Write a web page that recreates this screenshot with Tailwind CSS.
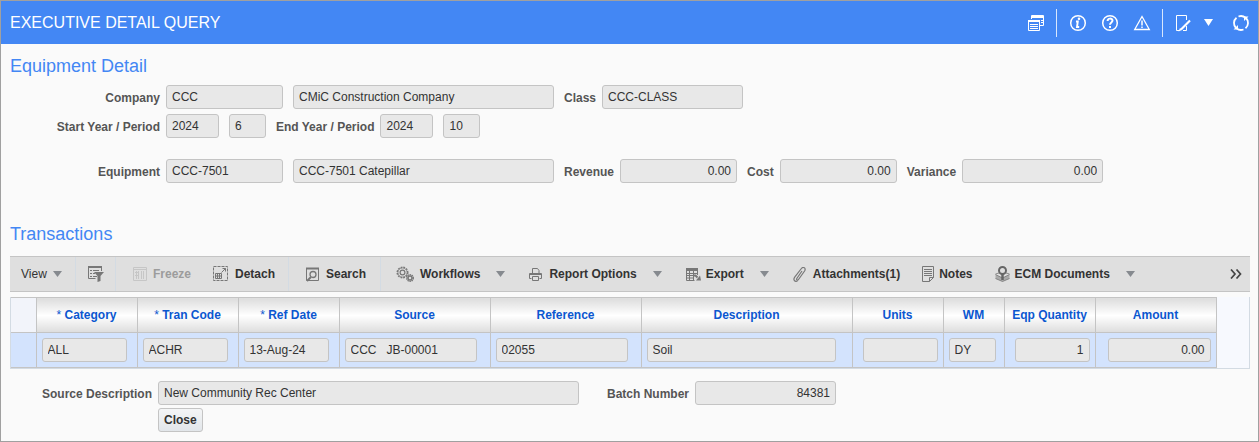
<!DOCTYPE html>
<html lang="en">
<head>
    <meta charset="UTF-8">
    <meta name="viewport" content="width=device-width, initial-scale=1.0">
    <title>Executive Detail Query</title>
    <script src="https://cdn.jsdelivr.net/npm/@tailwindcss/browser@4"></script>
</head>
<body class="bg-[#fafafa] font-['Liberation_Sans',Arial,sans-serif] text-xs text-[#333]">
    <div class="min-h-screen border border-[#a0a0a0]">
        <!-- Header -->
        <header class="flex h-[43px] items-center justify-between bg-[#4387f4] pl-[9px] pr-2 text-white">
            <h1 class="text-base">EXECUTIVE DETAIL QUERY</h1>
            <div class="flex items-center">
                <button aria-label="Windows" class="mr-3">
                    <svg class="size-4" viewBox="0 0 16 16" fill="none" stroke="currentColor">
                        <path d="M3.5 4V.5h12v10H12" /><path d="M3 2h13" stroke-width="2" />
                        <path d="M.5 5.5h11v10H.5z" /><path d="M0 6h12" stroke-width="2" />
                        <path d="M2 9.5h8M2 11.5h8M2 13.5h8M13 5.5h2M13 7.5h2" />
                    </svg>
                </button>
                <span class="h-7 w-px bg-white/80"></span>
                <button aria-label="Information" class="ml-3">
                    <svg class="size-[18px]" viewBox="0 0 18 18" fill="none" stroke="currentColor">
                        <circle cx="9" cy="9" r="7.3" stroke-width="1.5" />
                        <path d="M7 7.5h1.8L8 13h2.2" stroke-width="1.9" /><circle cx="10" cy="4.8" r="1.3" fill="currentColor" stroke="none" />
                    </svg>
                </button>
                <button aria-label="Help" class="ml-[14px]">
                    <svg class="size-[18px]" viewBox="0 0 18 18" fill="none" stroke="currentColor">
                        <circle cx="9" cy="9" r="7.3" stroke-width="1.5" />
                        <path d="M6.6 7c0-3.2 4.9-3 4.9-.4C11.5 8.5 9 8.4 9 10.8" stroke-width="2" /><path d="M8 12h2v2H8z" fill="currentColor" stroke="none" />
                    </svg>
                </button>
                <button aria-label="Warnings" class="ml-[14px]">
                    <svg class="size-[18px]" viewBox="0 0 18 18" fill="none" stroke="currentColor">
                        <path d="M9 2.5 16.3 15.5H1.7z" stroke-width="1.3" /><path d="M9 6.5v5M9 12.5V14" stroke-width="1.5" />
                    </svg>
                </button>
                <span class="ml-[11px] h-7 w-px bg-white/80"></span>
                <button aria-label="Edit" class="ml-3">
                    <svg class="h-[18px] w-4" viewBox="0 0 16 18" fill="none" stroke="currentColor">
                        <path d="M11.5 6V1.5H1.5v15h3M11.5 12v4.5H8" /><path d="m6 15.500 9-9" stroke-width="2.2" /><path d="M3.5 17.5 5 14l2 2z" fill="currentColor" stroke="none" />
                    </svg>
                </button>
                <button aria-label="Edit menu" class="ml-[13px]">
                    <svg class="h-[7px] w-[9px]" viewBox="0 0 9 7" fill="currentColor"><path d="M0 0h9L4.5 7z" /></svg>
                </button>
                <button aria-label="Refresh" class="ml-[19px]">
                    <svg class="size-[18px]" viewBox="0 0 18 18" fill="none" stroke="currentColor" stroke-width="1.8">
                        <path d="M4 14A7 7 0 0 1 4.5 3.7M6.5 2.5A7 7 0 0 1 13.5 3.7M14 4A7 7 0 0 1 13.5 14.3M11.500 15.5A7 7 0 0 1 4.5 14.3" />
                        <path d="M1.5 15.5H6V11zM16.5 2.5H12V7z" fill="currentColor" stroke="none" />
                    </svg>
                </button>
            </div>
        </header>

        <main class="pl-[9px] pr-2">
            <!-- Equipment detail -->
            <section>
                <h2 class="pt-2 text-lg text-[#4387f4]">Equipment Detail</h2>
                <div class="mt-[5px] flex items-center">
                    <label for="company" class="w-[150px] pt-0.5 text-right font-bold text-[#555]">Company</label>
                    <input id="company" value="CCC" readonly class="ml-1.5 h-6 w-[117px] rounded-[3px] border border-[#c4c4c4] bg-[#e8e8e8] px-[5px]">
                    <input aria-label="Company name" value="CMiC Construction Company" readonly class="ml-2.5 h-6 w-[261px] rounded-[3px] border border-[#c4c4c4] bg-[#e8e8e8] px-[5px]">
                    <label for="class" class="ml-2.5 pt-0.5 font-bold text-[#555]">Class</label>
                    <input id="class" value="CCC-CLASS" readonly class="ml-1.5 h-6 w-[141px] rounded-[3px] border border-[#c4c4c4] bg-[#e8e8e8] px-[5px]">
                </div>
                <div class="mt-[5px] flex items-center">
                    <label for="startYear" class="w-[150px] pt-0.5 text-right font-bold text-[#555]">Start Year / Period</label>
                    <input id="startYear" value="2024" readonly class="ml-1.5 h-6 w-[53px] rounded-[3px] border border-[#c4c4c4] bg-[#e8e8e8] px-[5px]">
                    <input aria-label="Start period" value="6" readonly class="ml-2.5 h-6 w-[37px] rounded-[3px] border border-[#c4c4c4] bg-[#e8e8e8] px-[5px]">
                    <label for="endYear" class="ml-2.5 pt-0.5 font-bold text-[#555]">End Year / Period</label>
                    <input id="endYear" value="2024" readonly class="ml-1.5 h-6 w-[53px] rounded-[3px] border border-[#c4c4c4] bg-[#e8e8e8] px-[5px]">
                    <input aria-label="End period" value="10" readonly class="ml-2.5 h-6 w-[37px] rounded-[3px] border border-[#c4c4c4] bg-[#e8e8e8] px-[5px]">
                </div>
                <div class="mt-[21px] flex items-center">
                    <label for="equipment" class="w-[150px] pt-0.5 text-right font-bold text-[#555]">Equipment</label>
                    <input id="equipment" value="CCC-7501" readonly class="ml-1.5 h-6 w-[117px] rounded-[3px] border border-[#c4c4c4] bg-[#e8e8e8] px-[5px]">
                    <input aria-label="Equipment name" value="CCC-7501 Catepillar" readonly class="ml-2.5 h-6 w-[261px] rounded-[3px] border border-[#c4c4c4] bg-[#e8e8e8] px-[5px]">
                    <label for="revenue" class="ml-2.5 pt-0.5 font-bold text-[#555]">Revenue</label>
                    <input id="revenue" value="0.00" readonly class="ml-1.5 h-6 w-[117px] rounded-[3px] border border-[#c4c4c4] bg-[#e8e8e8] px-[5px] text-right">
                    <label for="cost" class="ml-2.5 pt-0.5 font-bold text-[#555]">Cost</label>
                    <input id="cost" value="0.00" readonly class="ml-1.5 h-6 w-[117px] rounded-[3px] border border-[#c4c4c4] bg-[#e8e8e8] px-[5px] text-right">
                    <label for="variance" class="ml-2.5 pt-0.5 font-bold text-[#555]">Variance</label>
                    <input id="variance" value="0.00" readonly class="ml-1.5 h-6 w-[141px] rounded-[3px] border border-[#c4c4c4] bg-[#e8e8e8] px-[5px] text-right">
                </div>
            </section>

            <!-- Transactions -->
            <section class="mt-[37px]">
                <h2 class="text-lg text-[#4387f4]">Transactions</h2>

                <!-- Toolbar -->
                <div class="mt-2 flex h-9 items-center border-y border-[#c4c4c4] bg-[#dfdfdf] pl-[11px] pr-2 font-bold">
                    <button class="flex w-[54px] items-center font-normal">View
                        <svg class="ml-1.5 h-1.5 w-[9px]" viewBox="0 0 9 6" fill="#868a8f"><path d="M0 0h9L4.5 6z" /></svg>
                    </button>
                    <button aria-label="Query by example" class="flex h-full w-[41px] items-center border-x border-[#d3dbe3] pl-3">
                        <svg class="size-4" viewBox="0 0 16 16" fill="none" stroke="#777">
                            <path d="M0 1h14" stroke-width="2" /><path d="M.5 1v11.5h7M13.5 1v4M2 4.5h2M5 4.5h6M2 7.5h2M5 7.5h2M2 10.5h2M5 10.5h4" /><path d="M6 6h10l-3.5 4v5L9.5 16v-6z" fill="#777" stroke="none" />
                        </svg>
                    </button>
                    <button disabled class="ml-[17px] flex w-[80px] items-center gap-1.5 text-[#9c9c9c]">
                        <svg class="size-[14px]" viewBox="0 0 14 14" fill="none" stroke="#c6c6c6">
                            <path d="M.5.5h13v13H.5zM0 2.5h14M3.5 4v8M5.5 4v8M8.5 4v8M10.5 4v8M2 5.5h3M2 8.5h3" />
                        </svg>Freeze
                    </button>
                    <button class="flex h-full w-[76px] items-center gap-1.5 border-r border-[#d3dbe3]">
                        <svg class="size-4 shrink-0" viewBox="0 0 16 16" fill="none" stroke="#777">
                            <path d="M.5.5h14v14H.5z" stroke-dasharray="3 1" /><path d="M2.5 7.5h6v5h-6zM2.5 10h6M4.5 7.5v5M6.5 7.5v5M8.5 6.5l4-4M9.5 2.5h3v3" />
                        </svg>Detach
                    </button>
                    <button class="flex h-full w-[92px] items-center gap-[7px] border-r border-[#d3dbe3] pl-[17px]">
                        <svg class="h-[15px] w-[13px] shrink-0" viewBox="0 0 13 15" fill="none" stroke="#777">
                            <path d="M.5 1.5h12v12H.5z" /><path d="M0 1.5h13" stroke-width="2" /><circle cx="7" cy="7.5" r="3" stroke-width="1.3" /><path d="m5 10-4 4" stroke-width="2" />
                        </svg>Search
                    </button>
                    <button class="ml-[15px] flex items-center gap-1.5">
                        <svg class="h-4 w-[18px]" viewBox="0 0 18 16" fill="none" stroke="#777">
                            <circle cx="6.5" cy="6.5" r="5.3" stroke-width="1.4" stroke-dasharray="1.8 1" /><circle cx="6.5" cy="6.5" r="4.5" stroke-width=".7" /><circle cx="6.5" cy="6.5" r="2.4" stroke-width="1.2" />
                            <circle cx="14" cy="12" r="3.3" stroke-width="1.4" stroke-dasharray="1.4 .7" /><circle cx="14" cy="12" r="2" stroke-width="1.5" />
                        </svg>Workflows
                    </button>
                    <button aria-label="Workflows menu" class="ml-4">
                        <svg class="h-1.5 w-[9px]" viewBox="0 0 9 6" fill="#868a8f"><path d="M0 0h9L4.5 6z" /></svg>
                    </button>
                    <button class="ml-6 flex items-center gap-[7px]">
                        <svg class="size-[13px]" viewBox="0 0 13 13" fill="none" stroke="#777">
                            <path d="M3.5 5V.5h5l1.5 2V5M2.5 10.5h-2v-5h12v5h-2" /><path d="M1 6h11" stroke-width="2" /><path d="M3.5 8.5h6v4h-6z" />
                        </svg>Report Options
                    </button>
                    <button aria-label="Report options menu" class="ml-4">
                        <svg class="h-1.5 w-[9px]" viewBox="0 0 9 6" fill="#868a8f"><path d="M0 0h9L4.5 6z" /></svg>
                    </button>
                    <button class="ml-6 flex items-center gap-[5px]">
                        <svg class="h-[13px] w-[15px]" viewBox="0 0 15 13" fill="none" stroke="#777">
                            <path d="M0 1.5h12" stroke-width="3" /><path d="M.5 1v11.5h8M11.5 1v6M0 5.5h11M0 7.5h9M0 10h8M3.5 3v9M7.5 3v9" /><path d="M8 7.5h1.5l2 2" stroke-width="2" /><path d="M15 12.5h-5l4-5z" fill="#777" stroke="none" />
                        </svg>Export
                    </button>
                    <button aria-label="Export menu" class="ml-4">
                        <svg class="h-1.5 w-[9px]" viewBox="0 0 9 6" fill="#868a8f"><path d="M0 0h9L4.5 6z" /></svg>
                    </button>
                    <button class="ml-6 flex items-center gap-[7px]">
                        <svg class="h-[15px] w-[13px]" viewBox="0 0 13 15" fill="none" stroke="#777" stroke-width="1.2">
                            <path d="m9 4-5.2 7.5c-.8 1.3.8 2.3 1.7 1L11.6 4c1.9-2.9-1.5-4.7-3.2-2.5L1.7 10.2C-.4 13.2 2.5 15.4 4.5 13.7" />
                        </svg>Attachments(1)
                    </button>
                    <button class="ml-[22px] flex items-center gap-[5px]">
                        <svg class="h-4 w-3" viewBox="0 0 12 16" fill="none" stroke="#777">
                            <path d="M.5.5h11v11l-4 4h-7zM7.5 15.5v-4h4M2 3.5h8M2 5.5h8M2 7.5h8M2 9.5h8" />
                        </svg>Notes
                    </button>
                    <button class="ml-[22px] flex items-center gap-[5px]">
                        <svg class="h-4 w-[15px]" viewBox="0 0 15 16" fill="none" stroke="#777">
                            <path d="M.5 8.5 7.5 12l7-3.5v4L7.5 15.5l-7-3z" fill="#aaa" stroke="none" /><path d="M.5 8 4 7M14.5 8 11 7M.5 8.5l7 3.5 7-3.5M.5 12.5l7 3 7-3" stroke-width=".8" /><path d="M7.5 8v6" stroke-width="2.5" stroke="#666" /><circle cx="7.5" cy="4.5" r="3.5" stroke-width="2" stroke="#666" />
                        </svg>ECM Documents
                    </button>
                    <button aria-label="ECM documents menu" class="ml-4">
                        <svg class="h-1.5 w-[9px]" viewBox="0 0 9 6" fill="#868a8f"><path d="M0 0h9L4.5 6z" /></svg>
                    </button>
                    <button aria-label="More actions" class="ml-auto">
                        <svg class="h-2.5 w-3" viewBox="0 0 12 10" fill="none" stroke="#444" stroke-width="1.7"><path d="m1 .5 4 4.5-4 4.5M6.5.5l4 4.5-4 4.5" /></svg>
                    </button>
                </div>

                <!-- Transaction lines -->
                <div class="mt-[5px] border-x border-b border-[#d3dbe3] bg-[#f7f9fe]">
                    <table class="w-[1205px] table-fixed border-collapse">
                        <colgroup>
                            <col class="w-[25px]"><col class="w-[101px]"><col class="w-[101px]"><col class="w-[101px]"><col class="w-[151px]"><col class="w-[151px]"><col class="w-[211px]"><col class="w-[91px]"><col class="w-[61px]"><col class="w-[91px]"><col class="w-[121px]">
                        </colgroup>
                        <thead>
                            <tr class="h-[35px] border-y border-[#c4c4c4] bg-linear-to-b from-[#dedede] via-white to-[#dedede] text-[#0b57d0]">
                                <th class="border-r border-[#c4c4c4] bg-[#f2f4fa]"></th>
                                <th class="border-r border-[#c4c4c4]"><span class="font-normal">*</span> Category</th>
                                <th class="border-r border-[#c4c4c4]"><span class="font-normal">*</span> Tran Code</th>
                                <th class="border-r border-[#c4c4c4]"><span class="font-normal">*</span> Ref Date</th>
                                <th class="border-r border-[#c4c4c4]">Source</th>
                                <th class="border-r border-[#c4c4c4]">Reference</th>
                                <th class="border-r border-[#c4c4c4]">Description</th>
                                <th class="border-r border-[#c4c4c4]">Units</th>
                                <th class="border-r border-[#c4c4c4]">WM</th>
                                <th class="border-r border-[#c4c4c4]">Eqp Quantity</th>
                                <th class="border-r border-[#c4c4c4]">Amount</th>
                            </tr>
                        </thead>
                        <tbody>
                            <tr class="h-[35px] border-b border-[#c4c4c4] bg-[#d3e3fd]">
                                <td class="border-r border-[#c4c4c4]"></td>
                                <td class="border-r border-[#c4c4c4] pl-[5px]"><input aria-label="Category" value="ALL" readonly class="block h-6 w-[85px] rounded-[3px] border border-[#c4c4c4] bg-[#e8e8e8] px-[5px]"></td>
                                <td class="border-r border-[#c4c4c4] pl-[5px]"><input aria-label="Tran code" value="ACHR" readonly class="block h-6 w-[85px] rounded-[3px] border border-[#c4c4c4] bg-[#e8e8e8] px-[5px]"></td>
                                <td class="border-r border-[#c4c4c4] pl-[5px]"><input aria-label="Ref date" value="13-Aug-24" readonly class="block h-6 w-[85px] rounded-[3px] border border-[#c4c4c4] bg-[#e8e8e8] px-[5px]"></td>
                                <td class="border-r border-[#c4c4c4] pl-[5px]"><input aria-label="Source" value="CCC   JB-00001" readonly class="block h-6 w-[132px] rounded-[3px] border border-[#c4c4c4] bg-[#e8e8e8] px-[5px]"></td>
                                <td class="border-r border-[#c4c4c4] pl-[5px]"><input aria-label="Reference" value="02055" readonly class="block h-6 w-[132px] rounded-[3px] border border-[#c4c4c4] bg-[#e8e8e8] px-[5px]"></td>
                                <td class="border-r border-[#c4c4c4] pl-[5px]"><input aria-label="Description" value="Soil" readonly class="block h-6 w-[189px] rounded-[3px] border border-[#c4c4c4] bg-[#e8e8e8] px-[5px]"></td>
                                <td class="border-r border-[#c4c4c4] pr-[5px]"><input aria-label="Units" readonly class="ml-auto block h-6 w-[75px] rounded-[3px] border border-[#c4c4c4] bg-[#e8e8e8] px-[5px]"></td>
                                <td class="border-r border-[#c4c4c4] pl-[5px]"><input aria-label="WM" value="DY" readonly class="block h-6 w-[47px] rounded-[3px] border border-[#c4c4c4] bg-[#e8e8e8] px-[5px]"></td>
                                <td class="border-r border-[#c4c4c4] pr-[5px]"><input aria-label="Eqp quantity" value="1" readonly class="ml-auto block h-6 w-[75px] rounded-[3px] border border-[#c4c4c4] bg-[#e8e8e8] px-[5px] text-right"></td>
                                <td class="border-r border-[#c4c4c4] pr-[5px]"><input aria-label="Amount" value="0.00" readonly class="ml-auto block h-6 w-[103px] rounded-[3px] border border-[#c4c4c4] bg-[#e8e8e8] px-[5px] text-right"></td>
                            </tr>
                        </tbody>
                    </table>
                </div>

                <div class="mt-3 flex items-center">
                    <label for="sourceDesc" class="w-[142px] pt-0.5 text-right font-bold text-[#555]">Source Description</label>
                    <input id="sourceDesc" value="New Community Rec Center" readonly class="ml-1.5 h-6 w-[421px] rounded-[3px] border border-[#c4c4c4] bg-[#e8e8e8] px-[5px]">
                    <label for="batch" class="ml-7 pt-0.5 font-bold text-[#555]">Batch Number</label>
                    <input id="batch" value="84381" readonly class="ml-1.5 h-6 w-[141px] rounded-[3px] border border-[#c4c4c4] bg-[#e8e8e8] px-[5px] text-right">
                </div>
                <button class="ml-[148px] mt-[3px] block h-6 rounded-[3px] border border-[#c4c4c4] bg-linear-to-b from-[#f4f5f6] to-[#e2e6ea] px-[5px] font-bold">Close</button>
            </section>
        </main>
    </div>
</body>
</html>
